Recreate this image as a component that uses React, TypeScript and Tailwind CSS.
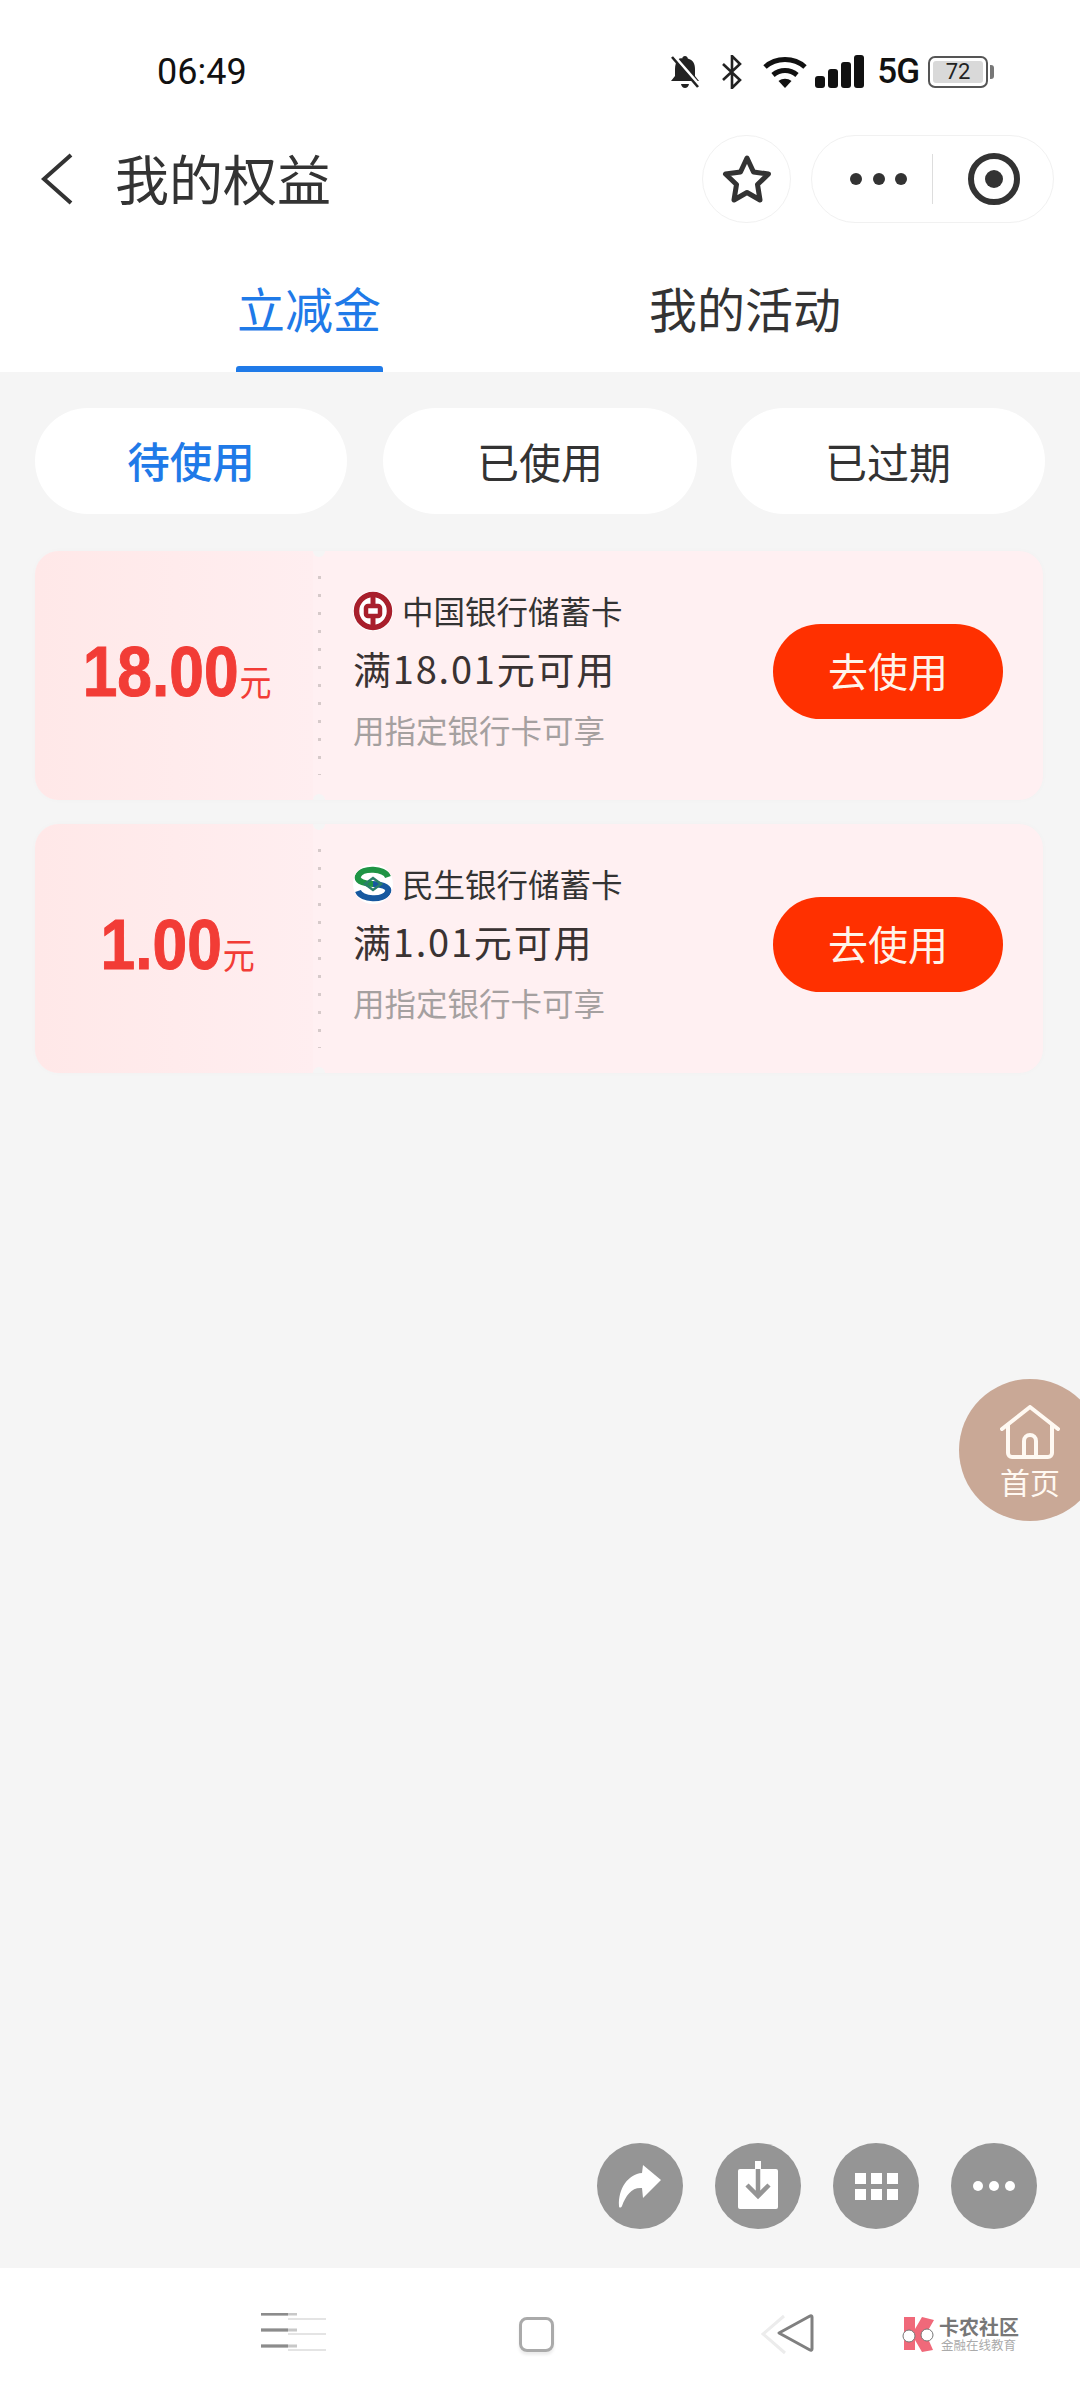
const CJK = "font-['Noto_Sans_CJK_SC','Noto_Sans',sans-serif]";

function StatusIcons() {
  return (
    <div className="flex items-center">
      <svg width="32" height="34" viewBox="0 0 32 34" className="text-[#222]">
        <path d="M16 1c1.600 0 2.600 1 2.800 2.600C24 5 26 9 26 14v7l4 5H2l4-5v-7c0-4 1-7 3-9.500C10.500 3.500 12 2.800 13.200 3.600 13.400 2 14.400 1 16 1z" fill="currentColor" />
        <path d="M12 29h8c-.5 2.500-2 4-4 4s-3.500-1.500-4-4z" fill="currentColor" />
        <path d="M5 1l26 30" stroke="#fff" strokeWidth="3" />
        <path d="M3 2l26 30" stroke="currentColor" strokeWidth="2.600" />
      </svg>
      <svg width="22" height="34" viewBox="0 0 22 34" className="ml-[20px]" fill="none" stroke="#222" strokeWidth="2.600">
        <path d="M2 9l17 16-8 8V1l8 8L2 25" />
      </svg>
      <svg width="44" height="31" viewBox="0 0 44 31" className="ml-[20px]" fill="none" stroke="#111" strokeWidth="5">
        <path d="M2 10c11-10 29-10 40 0" />
        <path d="M10 18c7-6 17-6 24 0" />
        <path d="M22 31l-6.500-7c4-3 9-3 13 0z" fill="#111" stroke="none" />
      </svg>
      <div className="ml-[8px] flex h-[32px] items-end gap-[3px]">
        <div className="h-[12px] w-[10px] rounded-[3px] bg-[#111]" />
        <div className="h-[19px] w-[10px] rounded-[3px] bg-[#111]" />
        <div className="h-[26px] w-[10px] rounded-[3px] bg-[#111]" />
        <div className="h-[33px] w-[10px] rounded-[3px] bg-[#111]" />
      </div>
      <span className="ml-[13px] font-['Roboto',sans-serif] text-[35px] leading-[36px] font-medium tracking-[-1px] text-[#111]">5G</span>
      <div className="ml-[9px] flex h-[32px] w-[60px] items-center rounded-[7px] border-2 border-[#555] p-[3px]">
        <div className="flex h-full flex-1 items-center justify-center rounded-[3px] bg-[#d9d9d9] font-['Roboto',sans-serif] text-[22px] leading-none text-[#222]">72</div>
      </div>
      <div className="ml-[2px] h-[14px] w-[4px] rounded-r-[3px] bg-[#777]" />
    </div>
  );
}

function BocLogo() {
  return (
    <svg width="40" height="40" viewBox="0 0 40 40" className="rounded-full bg-white">
      <circle cx="20" cy="20" r="16.500" fill="none" stroke="#a81f2c" strokeWidth="5.500" />
      <rect x="13" y="15" width="14" height="10" rx="2" fill="none" stroke="#a81f2c" strokeWidth="4.500" />
      <path d="M20 3v10M20 27v10" stroke="#a81f2c" strokeWidth="5" />
    </svg>
  );
}

function CmbcLogo() {
  return (
    <svg width="40" height="40" viewBox="0 0 40 40" className="rounded-full bg-white" fill="none">
      <path d="M35 13C32 4 9 3 5 12c-2 6 9 8 15 8" stroke="#1f9445" strokeWidth="6" />
      <path d="M5 27c3 9 26 10 30 1 2-6-9-8-15-8" stroke="#16589f" strokeWidth="6" />
      <path d="M12 20l8-6 8 6-8 6z" stroke="#2a7f6a" strokeWidth="2.500" />
    </svg>
  );
}

function Coupon({ amount, limit, bank, logo }: { amount: string; limit: string; bank: string; logo: React.ReactNode }) {
  return (
    <div className="flex h-[249px] rounded-[24px] bg-[#fff0f2] shadow-[0_0_6px_rgba(0,0,0,0.02)]">
      <div className="flex w-[278px] items-center justify-center rounded-l-[24px] bg-gradient-to-r from-[#ffe8e8] to-[#ffeef0] pb-[8px] pl-[7px]">
        <div className="flex scale-x-[0.89] items-baseline">
          <span className="font-['Liberation_Sans',sans-serif] text-[70px] leading-none font-bold text-[#f23c36] [-webkit-text-stroke:1px_#f23c36]">{amount}</span>
          <span className="ml-[1px] text-[36px] leading-none text-[#f23c36]">元</span>
        </div>
      </div>
      <div className="flex w-[12px] flex-col items-center justify-between">
        <div className="h-[6px] w-[12px] rounded-b-full bg-[#f5f5f5]" />
        <div className="h-[199px] w-[3px] bg-[repeating-linear-gradient(to_bottom,#d6caca_0,#d6caca_3px,transparent_3px,transparent_18px)]" />
        <div className="h-[6px] w-[12px] rounded-t-full bg-[#f5f5f5]" />
      </div>
      <div className="flex flex-1 items-start justify-between pr-[40px] pl-[28px]">
        <div className="pt-[38px]">
          <div className="flex h-[44px] items-center gap-[9px] text-[31.500px] text-[#333]">
            {logo}
            <span>{bank}</span>
          </div>
          <div className="mt-[10px] text-[38px] leading-[50px] tracking-[1.800px] text-[#3a3333]">{limit}</div>
          <div className="mt-[14px] text-[31.500px] leading-[44px] text-[#a5a0a0]">用指定银行卡可享</div>
        </div>
        <button className="mt-[73px] h-[95px] w-[230px] rounded-full bg-[#ff3000] pb-[4px] text-[40px] leading-none text-[#fff4ea]">去使用</button>
      </div>
    </div>
  );
}

function ActionButton({ children }: { children: React.ReactNode }) {
  return <div className="flex h-[86px] w-[86px] items-center justify-center rounded-full bg-[#959595]">{children}</div>;
}

export default function App() {
  return (
    <div className={`relative flex h-[2400px] w-[1080px] flex-col overflow-hidden bg-[#f5f5f5] ${CJK}`}>
      <div className="bg-white">
        <div className="flex h-[135px] items-center justify-between pt-[9px] pr-[86px] pl-[157px]">
          <span className="font-['Roboto',sans-serif] text-[36px] leading-none text-[#111]">06:49</span>
          <StatusIcons />
        </div>

        <div className="flex h-[88px] items-center pr-[26px] pl-[41px]">
          <svg width="32" height="52" viewBox="0 0 32 52" fill="none" stroke="#333" strokeWidth="4">
            <path d="M30 2L3 26l27 24" />
          </svg>
          <h1 className="mb-[3px] ml-[42px] text-[54px] leading-none font-normal text-[#333]">我的权益</h1>
          <div className="ml-auto flex h-[88px] w-[89px] items-center justify-center rounded-full border border-[#f1f1f1]">
            <svg width="50" height="50" viewBox="0 0 50 50" fill="none" stroke="#333" strokeWidth="5" strokeLinejoin="round">
              <path d="M25 4l6.500 14 15 2-11 10.500L38 46l-13-7.500L12 46l2.500-15.500L3.500 20l15-2z" />
            </svg>
          </div>
          <div className="ml-[20px] flex h-[88px] w-[243px] items-center rounded-full border border-[#f1f1f1] pl-[38px]">
            <div className="flex w-[57px] justify-between">
              <div className="h-[12px] w-[12px] rounded-full bg-[#333]" />
              <div className="h-[12px] w-[12px] rounded-full bg-[#333]" />
              <div className="h-[12px] w-[12px] rounded-full bg-[#333]" />
            </div>
            <div className="ml-[25px] h-[50px] w-px bg-[#ddd]" />
            <div className="ml-[35px] flex h-[52px] w-[52px] items-center justify-center rounded-full border-[6px] border-[#333]">
              <div className="h-[18px] w-[18px] rounded-full bg-[#333]" />
            </div>
          </div>
        </div>

        <div className="flex h-[149px] pl-[91px]">
          <div className="flex w-[436px] flex-col items-center pt-[56px]">
            <span className="text-[48px] leading-[56px] text-[#1f7ae8]">立减金</span>
            <div className="mt-[31px] h-[6px] w-[147px] rounded-t-[3px] bg-[#1f7ae8]" />
          </div>
          <div className="flex w-[436px] flex-col items-center pt-[56px]">
            <span className="text-[48px] leading-[56px] text-[#333]">我的活动</span>
          </div>
        </div>
      </div>

      <div className="relative flex flex-1 flex-col px-[35px]">
        <div className="mt-[36px] flex">
          <div className="flex h-[106px] w-[312px] items-center justify-center rounded-full bg-white pb-[2px] text-[42.500px] font-medium text-[#1f7ae8]">待使用</div>
          <div className="ml-[36px] flex h-[106px] w-[314px] items-center justify-center rounded-full bg-white pb-[2px] text-[42px] text-[#333]">已使用</div>
          <div className="ml-[34px] flex h-[106px] w-[314px] items-center justify-center rounded-full bg-white pb-[2px] text-[42px] text-[#333]">已过期</div>
        </div>

        <div className="mt-[37px] flex w-[1008px] flex-col gap-[24px]">
          <Coupon amount="18.00" limit="满18.01元可用" bank="中国银行储蓄卡" logo={<BocLogo />} />
          <Coupon amount="1.00" limit="满1.01元可用" bank="民生银行储蓄卡" logo={<CmbcLogo />} />
        </div>

        <div className="absolute top-[1007px] left-[959px] flex h-[142px] w-[142px] flex-col items-center rounded-full bg-[#c9a896] pt-[26px] text-[#fff9f2]">
          <svg width="60" height="54" viewBox="0 0 60 54" fill="none" stroke="currentColor" strokeWidth="4" strokeLinejoin="round" strokeLinecap="round">
            <path d="M2 24L30 2l28 22" />
            <path d="M8 20v28a4 4 0 0 0 4 4h36a4 4 0 0 0 4-4V20" />
            <path d="M24 52V36a6 6 0 0 1 12 0v16" />
          </svg>
          <span className="mt-[3px] text-[30px] leading-[38px]">首页</span>
        </div>

        <div className="mt-auto mb-[39px] flex justify-end gap-[32px] pr-[8px]">
          <ActionButton>
            <svg width="44" height="44" viewBox="0 0 44 44" fill="#fff">
              <path d="M25 1L43 16 25 34 24 24C14 23 8 31 4 42 3 44 1 44 1 42 0 25 10 10 24 9z" />
            </svg>
          </ActionButton>
          <ActionButton>
            <svg width="42" height="50" viewBox="0 0 42 50">
              <rect x="1" y="8" width="40" height="40" rx="2" fill="#fff" />
              <rect x="18" y="0" width="6" height="10" fill="#fff" />
              <path d="M21 8v26M10 24l11 11 11-11" fill="none" stroke="#959595" strokeWidth="4.500" />
            </svg>
          </ActionButton>
          <ActionButton>
            <div className="grid grid-cols-3 gap-[5px]">
              {[0, 1, 2, 3, 4, 5].map((n) => (
                <div key={n} className="h-[11px] w-[11px] bg-white" />
              ))}
            </div>
          </ActionButton>
          <ActionButton>
            <div className="flex gap-[6px]">
              <div className="h-[10px] w-[10px] rounded-full bg-white" />
              <div className="h-[10px] w-[10px] rounded-full bg-white" />
              <div className="h-[10px] w-[10px] rounded-full bg-white" />
            </div>
          </ActionButton>
        </div>
      </div>

      <div className="flex h-[132px] items-center bg-white pl-[261px]">
        <svg width="65" height="42" viewBox="0 0 65 42">
          <path d="M27 6h38M27 21h38M27 37h38" stroke="#e4e4e4" strokeWidth="2" />
          <path d="M0 1h36M0 17h36M0 33h36" stroke="#c8c8c8" strokeWidth="3" />
          <path d="M0 1h27M0 17h27M0 33h27" stroke="#8c8c8c" strokeWidth="3" />
        </svg>
        <div className="ml-[193px] h-[35px] w-[35px] rounded-[8px] border-[3px] border-[#aaa] shadow-[0_3px_3px_rgba(0,0,0,0.08)]" />
        <svg width="54" height="42" viewBox="0 0 54 42" className="ml-[206px]" fill="none">
          <path d="M24 3L3 21l22 19" stroke="#ececec" strokeWidth="3" />
          <path d="M50 3L19 20l31 17c1 .5 2 0 2-1V4c0-1-1-1.500-2-1z" stroke="#808080" strokeWidth="3" strokeLinejoin="round" fill="#fff" />
        </svg>
        <svg width="36" height="36" viewBox="0 0 36 36" className="ml-[86px]">
          <path d="M4 1h11v12l7-12 12 3-8 14 7 16-11 2-7-12v10H4z" fill="#f0697a" />
          <circle cx="9" cy="20" r="6" fill="#fff" stroke="#777" strokeWidth="1" />
          <circle cx="27" cy="19" r="6" fill="#fff" stroke="#777" strokeWidth="1" />
        </svg>
        <div className="ml-[3px] flex flex-col">
          <span className="text-[20px] leading-[22px] font-bold text-[#777]">卡农社区</span>
          <span className="ml-[2px] text-[12.500px] leading-[14px] text-[#aaa]">金融在线教育</span>
        </div>
      </div>
    </div>
  );
}
